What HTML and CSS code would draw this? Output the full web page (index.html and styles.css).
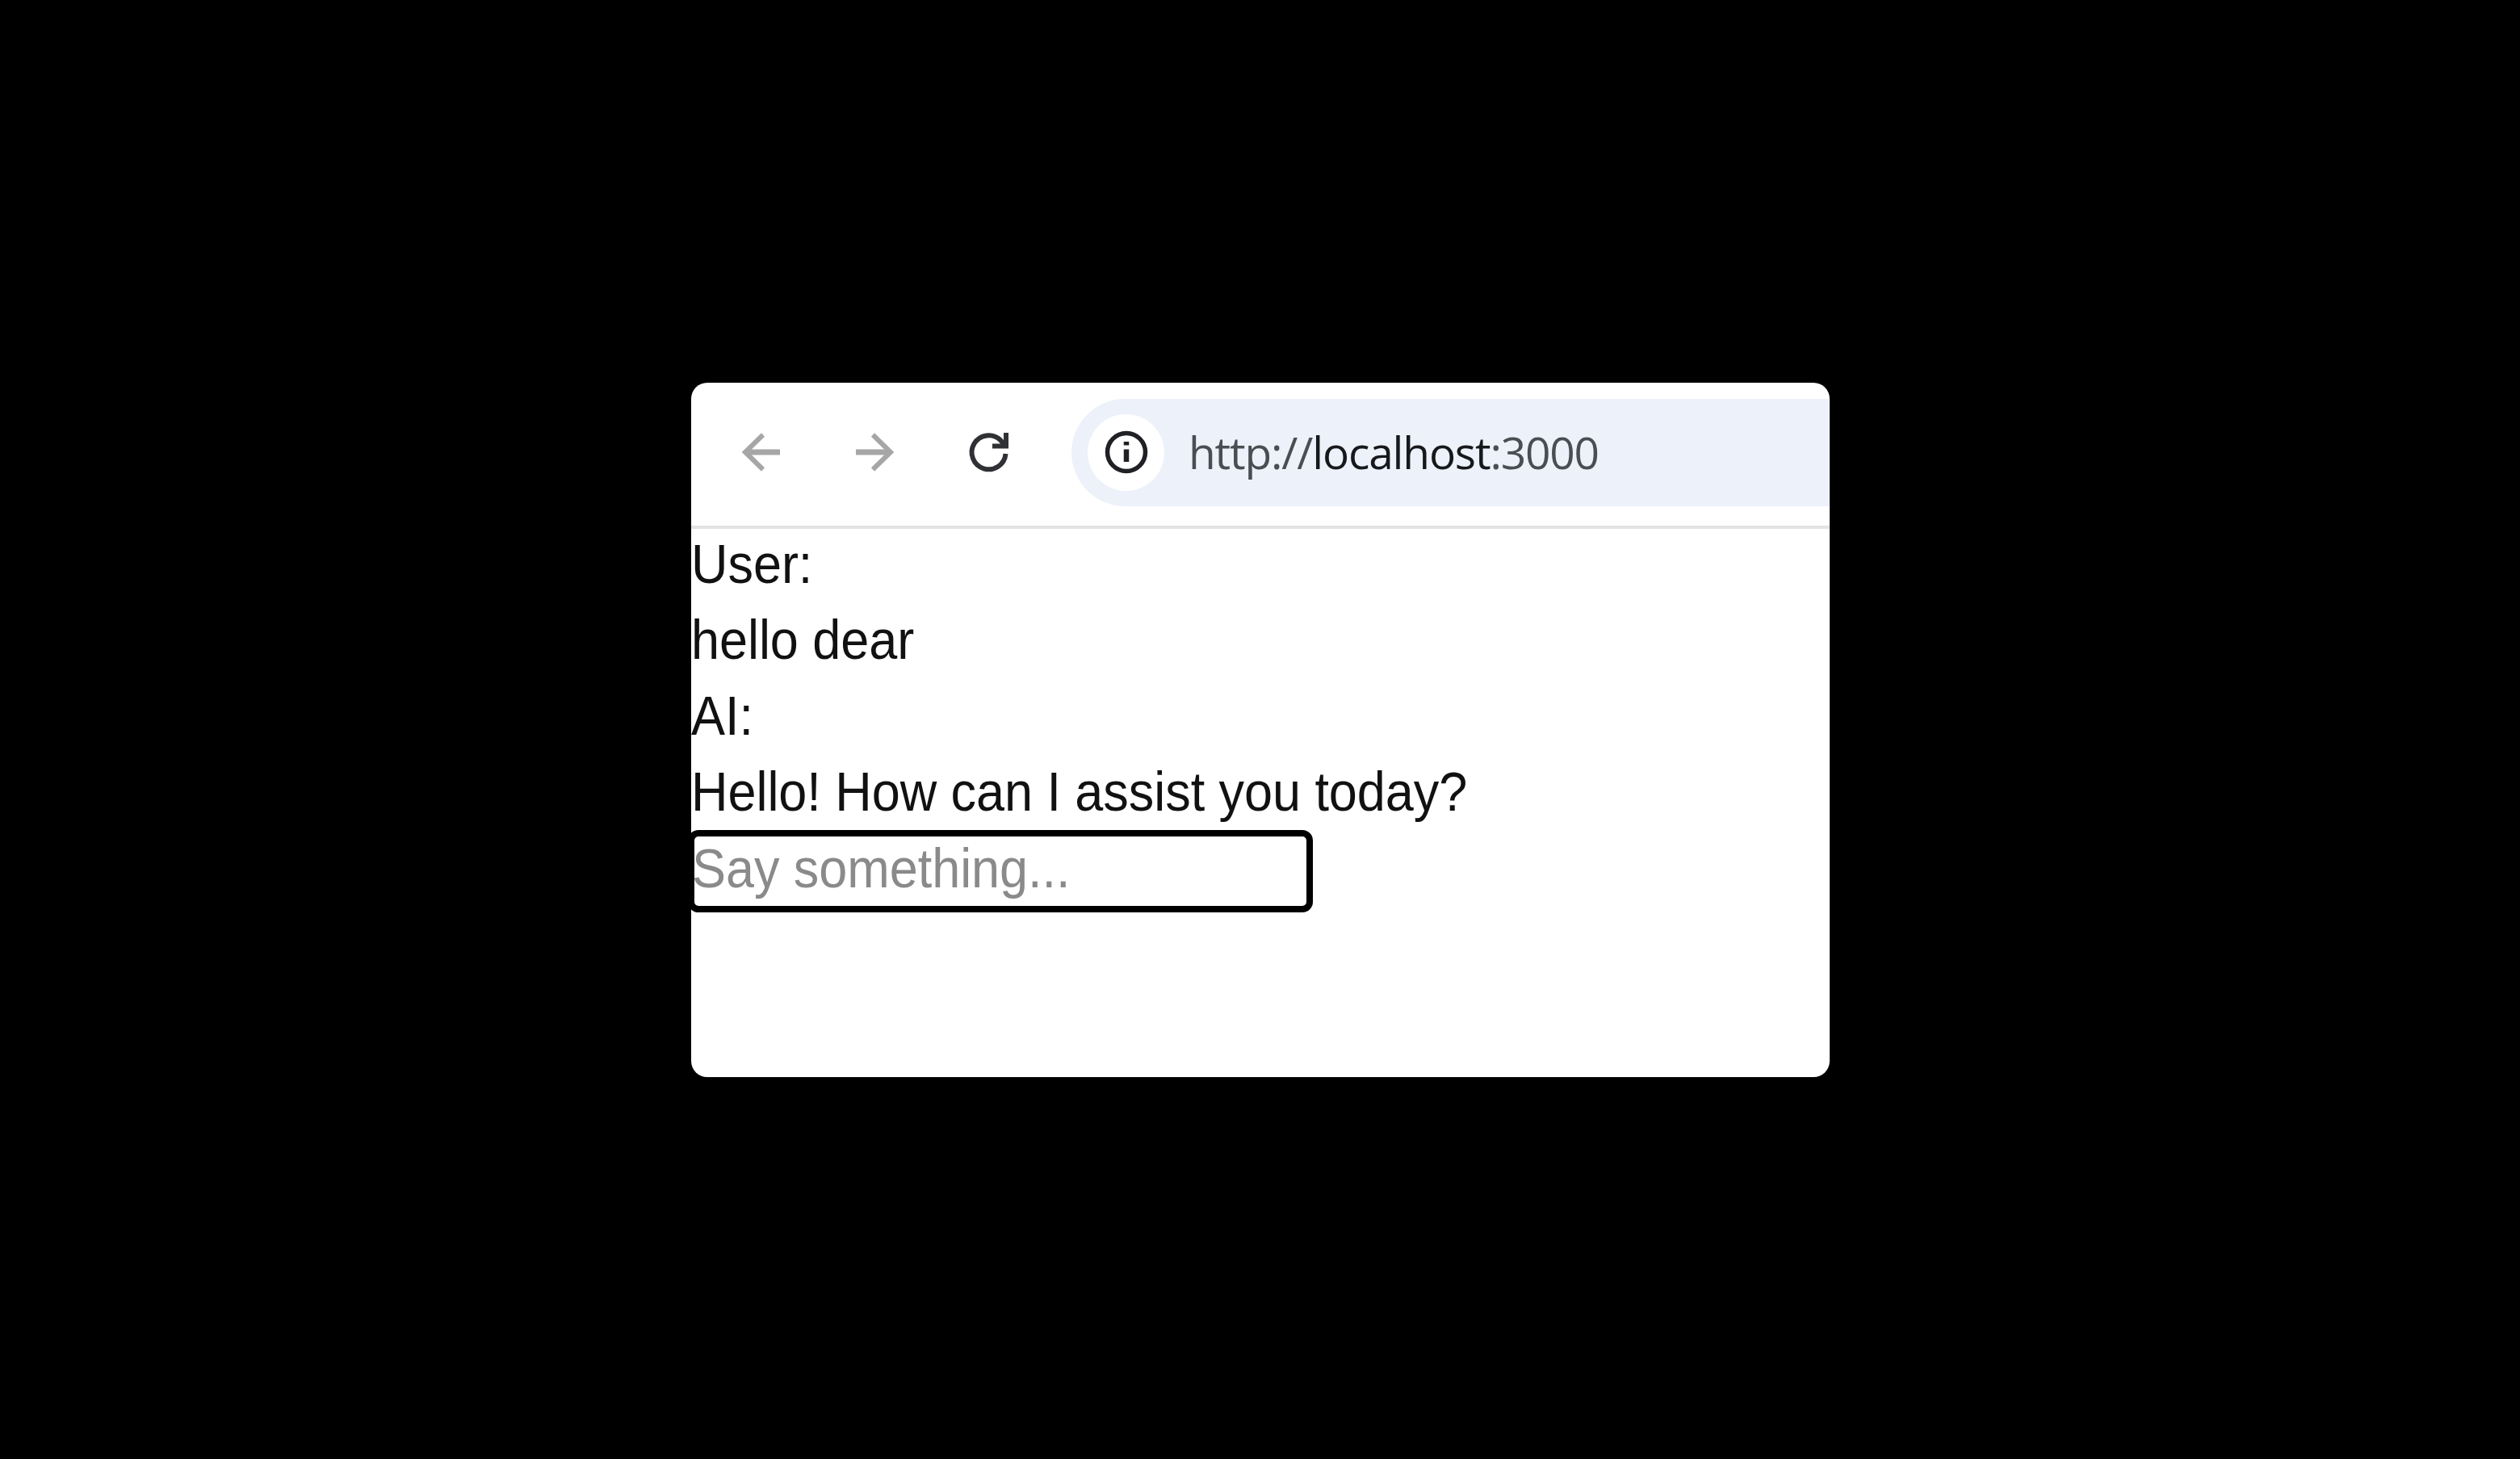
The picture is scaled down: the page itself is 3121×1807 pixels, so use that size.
FILE: index.html
```html
<!DOCTYPE html>
<html lang="en">
<head>
    <meta charset="UTF-8">
    <meta name="viewport" content="width=device-width, initial-scale=1.0">
    <title>localhost:3000</title>
    <link rel="stylesheet" href="styles.css">
</head>
<body>
    <div class="browser">
        <header class="toolbar">
            <svg class="nav-icon disabled" viewBox="0 0 48 48">
                <path d="M4 24H47" stroke-width="7"/>
                <path d="M26 2.5L4 24L26 45.5" stroke-width="6"/>
            </svg>
            <svg class="nav-icon disabled" viewBox="0 0 48 48">
                <path d="M0 24H43" stroke-width="7"/>
                <path d="M21 2.5L43 24L21 45.5" stroke-width="6"/>
            </svg>
            <svg class="nav-icon" viewBox="0 0 48 48">
                <path d="M44.5 26A21 21 0 1 1 38 9L44 16" stroke-width="6"/>
                <path d="M45 0V16.5H28" stroke-width="6"/>
            </svg>
            <div class="address-bar">
                <span class="site-info">
                    <svg viewBox="0 0 54 54">
                        <circle cx="27" cy="27" r="23.5" stroke-width="5.5"/>
                        <path d="M27 14V18.5M27 23.5V39" stroke-width="6.5"/>
                    </svg>
                </span>
                <span class="url">http://<b>localhost</b>:3000</span>
            </div>
        </header>
        <main class="chat">
            <p>User:</p>
            <p>hello dear</p>
            <p>AI:</p>
            <p>Hello! How can I assist you today?</p>
            <form>
                <input type="text" placeholder="Say something...">
            </form>
        </main>
    </div>
</body>
</html>
```
FILE: styles.css
```css
* {
    box-sizing: border-box;
}
body {
    margin: 0;
    height: 1807px;
    padding: 474px 855px 473px 856px;
    background: #000;
}
.browser {
    height: 860px;
    background: #fff;
    border-radius: 20px;
    overflow: hidden;
}
.toolbar {
    display: flex;
    align-items: center;
    height: 180.5px;
    padding-left: 63px;
    padding-bottom: 4px;
    border-bottom: 4px solid #e3e3e3;
}
.nav-icon {
    flex: none;
    width: 48px;
    height: 48px;
    margin-right: 93px;
    fill: none;
    stroke: #303134;
    overflow: visible;
}
.nav-icon.disabled {
    stroke: #a6a6a6;
}
.nav-icon:nth-of-type(3) {
    margin-right: 78px;
}
.address-bar {
    flex: 1;
    display: flex;
    align-items: center;
    height: 133px;
    padding-left: 20px;
    background: #ecf1fa;
    border-radius: 67px 0 0 67px;
}
.site-info {
    display: flex;
    align-items: center;
    justify-content: center;
    width: 95px;
    height: 95px;
    margin-right: 30px;
    background: #fff;
    border-radius: 50%;
}
.site-info svg {
    width: 54px;
    height: 54px;
    fill: none;
    stroke: #202124;
}
.url {
    font-family: "Open Sans", "Noto Sans", sans-serif;
    font-size: 55px;
    line-height: 72px;
    letter-spacing: -1.15px;
    color: #4a4d52;
}
.url b {
    font-weight: normal;
    color: #17181b;
}
.chat {
    font-family: Arial, "Liberation Sans", sans-serif;
    font-size: 63px;
    line-height: 94.3px;
    letter-spacing: -0.05px;
    color: #111;
}
.chat p {
    margin: 0;
    transform: translateY(-4px) scaleY(1.08);
}
.chat form {
    width: 766px;
    height: 94px;
    border-radius: 9px;
    outline: 8px solid #000;
    outline-offset: -4px;
}
.chat input {
    display: block;
    width: 100%;
    height: 94px;
    padding: 0 0 0 1px;
    border: none;
    outline: none;
    background: none;
    font: inherit;
    color: inherit;
    letter-spacing: inherit;
    transform: translateY(-4px) scaleY(1.08);
}
.chat input::placeholder {
    color: #8a8a8a;
    opacity: 1;
}
```
